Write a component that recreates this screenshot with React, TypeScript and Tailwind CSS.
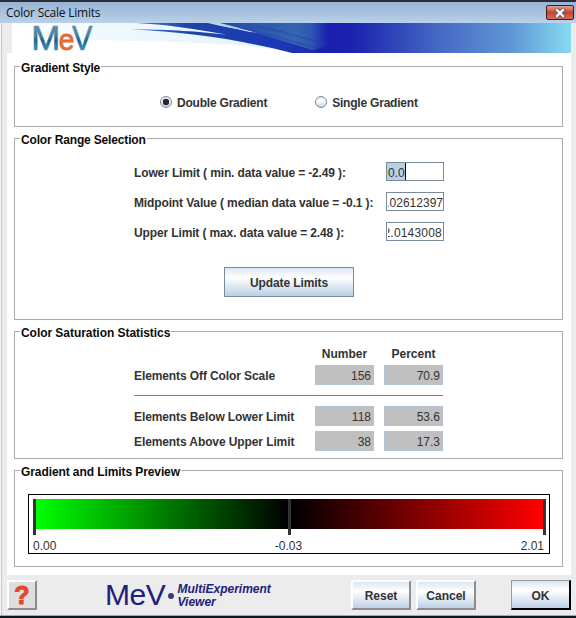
import type { ReactNode } from "react";

function Section({
  title,
  className,
  tracking = "tracking-[-0.16px]",
  children,
}: {
  title: string;
  className: string;
  tracking?: string;
  children: ReactNode;
}) {
  return (
    <fieldset className={`m-0 min-w-0 border border-[#a9abb1] p-0 ${className}`}>
      <legend className={`ml-[5px] h-[15px] px-px pt-[2px] text-[12px] leading-[14px] font-bold text-[#0c0c0c] ${tracking}`}>
        {title}
      </legend>
      {children}
    </fieldset>
  );
}

function Radio({ label, checked }: { label: string; checked?: boolean }) {
  return (
    <label className="flex h-4 items-center gap-[5px]">
      <svg width="12" height="12" viewBox="0 0 12 12">
        <defs>
          <linearGradient id="radioFill" x1="0" y1="0" x2="0" y2="1">
            <stop offset="0" stopColor="#dde8f3" />
            <stop offset="0.4" stopColor="#ffffff" />
            <stop offset="1" stopColor="#bfd2e5" />
          </linearGradient>
        </defs>
        <circle cx="6" cy="6" r="5.5" fill="url(#radioFill)" stroke="#7a8a99" />
        {checked && <circle cx="6" cy="6" r="3.2" fill="#222a33" />}
      </svg>
      <span className="pt-px tracking-[-0.21px]">{label}</span>
    </label>
  );
}

function LimitRow({ label, children }: { label: string; children: ReactNode }) {
  return (
    <div className="flex h-[19px] items-center">
      <span className="w-[252px] pt-[3px] leading-4 whitespace-nowrap tracking-[-0.13px]">{label}</span>
      <div className="flex h-[19px] w-[58px] items-center overflow-hidden border border-[#7a8a99] bg-white font-normal">
        {children}
      </div>
    </div>
  );
}

function StatCell({ value }: { value: string }) {
  return (
    <div className="h-5 w-[59px] border border-[#b4c3d3] bg-[#c0c0c0] pr-[2px] pt-[2px] text-right leading-4 font-normal">
      {value}
    </div>
  );
}

function StatRow({ label, number, percent }: { label: string; number: string; percent: string }) {
  return (
    <div className="flex h-5 gap-[10px]">
      <span className="w-[171px] pt-[3px] leading-4 whitespace-nowrap tracking-[-0.1px]">{label}</span>
      <StatCell value={number} />
      <StatCell value={percent} />
    </div>
  );
}

const raised =
  "flex h-[30px] w-[60px] items-center justify-center border-t-2 border-l-2 border-r-2 border-b-2 border-t-white border-l-white border-r-[#8d8d8d] border-b-[#8d8d8d] bg-linear-to-b from-[#dbe6f1] via-white via-35% to-[#bdd1e6] pt-[2px]";

function Banner() {
  return (
    <svg width="564" height="30" viewBox="7 23 564 30" className="block overflow-visible">
      <defs>
        <linearGradient id="sky" x1="0" x2="1">
          <stop offset="0" stopColor="#fff" />
          <stop offset="0.35" stopColor="#eef9fd" />
          <stop offset="1" stopColor="#e2f3fa" />
        </linearGradient>
        <linearGradient id="sea" gradientUnits="userSpaceOnUse" x1="310" x2="571" y1="0" y2="0">
          <stop offset="0" stopColor="#1c26ae" />
          <stop offset="0.07" stopColor="#1a1fae" />
          <stop offset="0.16" stopColor="#1b22ae" />
          <stop offset="0.5" stopColor="#466ac5" />
          <stop offset="0.78" stopColor="#6198d6" />
          <stop offset="1" stopColor="#86dcf0" />
        </linearGradient>
        <linearGradient id="wave" gradientUnits="userSpaceOnUse" x1="130" x2="325" y1="0" y2="0">
          <stop offset="0" stopColor="#4f80c8" />
          <stop offset="0.3" stopColor="#1f45a8" />
          <stop offset="0.75" stopColor="#1c38b6" />
          <stop offset="1" stopColor="#1c26ae" />
        </linearGradient>
        <linearGradient id="crest" gradientUnits="userSpaceOnUse" x1="215" x2="328" y1="0" y2="0">
          <stop offset="0" stopColor="#1f49a8" />
          <stop offset="0.7" stopColor="#3565b0" />
          <stop offset="0.85" stopColor="#2f58b0" />
          <stop offset="1" stopColor="#1b20ae" />
        </linearGradient>
        <linearGradient id="ink" gradientUnits="userSpaceOnUse" x1="0" x2="0" y1="24" y2="51">
          <stop offset="0" stopColor="#6f93a8" />
          <stop offset="0.45" stopColor="#3f7f9f" />
          <stop offset="0.6" stopColor="#17618c" />
          <stop offset="1" stopColor="#3b9ac0" />
        </linearGradient>
      </defs>
      <rect x="7" y="23" width="564" height="30" fill="#fff" />
      <rect x="7" y="23" width="5" height="30" fill="#ececec" />
      <path d="M12 23H240L290 52C220 38 120 44 12 36Z" fill="url(#sky)" />
      <path d="M312 23H571V53H312Z" fill="url(#sea)" />
      <path
        d="M136 23H210L250 32L316 38V53H292C240 40 190 32 130 29.6C170 29.4 195 31.5 226 34.6C190 28 165 24.5 136 23Z"
        fill="url(#wave)"
      />
      <path d="M208 23H222C232 26 240 28 248 30.5C234 29 220 26 208 23Z" fill="#b5d9ec" />
      <path d="M220 23H328V46L312 50C286 42 252 31 220 23Z" fill="url(#crest)" />
      <path d="M240 28C266 33 292 42 318 48M256 26C282 31 300 37 320 42" fill="none" stroke="#2036b4" strokeWidth="1.5" opacity="0.4" />
      <g fontFamily="Liberation Sans, sans-serif" fontWeight="400">
        <text x="31.2" y="50.3" fontSize="35" textLength="29" lengthAdjust="spacingAndGlyphs" fill="url(#ink)" stroke="url(#ink)" strokeWidth="0.6">
          M
        </text>
        <text x="72" y="50.3" fontSize="35" textLength="20.5" lengthAdjust="spacingAndGlyphs" fill="url(#ink)" stroke="url(#ink)" strokeWidth="0.6">
          V
        </text>
        <text x="58.8" y="50.2" fontSize="29" textLength="15.6" lengthAdjust="spacingAndGlyphs" fill="#e06d3a" stroke="#e06d3a" strokeWidth="0.9">
          e
        </text>
      </g>
    </svg>
  );
}

export default function App() {
  return (
    <div className="flex h-[618px] w-[576px] flex-col overflow-hidden bg-[#ececec] font-['Liberation_Sans',Arial,sans-serif] text-[12px] font-bold text-[#333]">
      <header className="flex h-[23px] items-center justify-between border-t-2 border-[#2b2d3c] bg-linear-to-b from-[#98b4d2] to-[#b9d1ea] pr-[2px] pl-[6px]">
        <h1 className="pt-px font-['Open_Sans',sans-serif] text-[12px] leading-4 font-normal tracking-[-0.23px] text-[#111]">
          Color Scale Limits
        </h1>
        <button className="flex h-[15px] w-7 items-center justify-center rounded-[2px] border border-[#4a1420] bg-linear-to-b from-[#e0a193] via-[#c5432e] via-50% to-[#d4705a]">
          <svg width="12" height="10" viewBox="0 0 12 10">
            <path d="M3 2L9 8M9 2L3 8" stroke="#53576a" strokeWidth="4" strokeLinecap="square" />
            <path d="M3 2L9 8M9 2L3 8" stroke="#fff" strokeWidth="2.4" strokeLinecap="square" />
          </svg>
        </button>
      </header>

      <div className="flex h-[592px] border-l border-[#f4f8fb]">
        <div className="w-[6px] shrink-0 border-l border-[#b7cddd] bg-[#ececec]" />
        <div className="flex w-[564px] shrink-0 flex-col">
          <Banner />
          <main className="flex h-[522px] flex-col gap-1 bg-white pt-[6px] pr-2 pl-[7px]">
            <Section title="Gradient Style" className="h-[68px]">
              <div className="flex gap-12 pt-5 pl-[145px]">
                <Radio label="Double Gradient" checked />
                <Radio label="Single Gradient" />
              </div>
            </Section>

            <Section title="Color Range Selection" className="h-[189px]">
              <div className="flex flex-col gap-[11px] pt-4 pl-[119px]">
                <LimitRow label="Lower Limit ( min. data value = -2.49 ):">
                  <span className="h-[17px] border-r border-black bg-[#b8cfe5] pt-[2px] pl-px leading-4">0.0</span>
                </LimitRow>
                <LimitRow label="Midpoint Value ( median data value = -0.1 ):">
                  <span className="ml-px flex h-[17px] w-[55px] justify-end overflow-hidden pt-[2px] leading-4">
                    -0.02612397
                  </span>
                </LimitRow>
                <LimitRow label="Upper Limit ( max. data value = 2.48 ):">
                  <span className="ml-px flex h-[17px] w-[54px] justify-end overflow-hidden pt-[2px] leading-4 tracking-[0.2px]">
                    2.0143008
                  </span>
                </LimitRow>
              </div>
              <button className="mt-[26px] ml-[209px] flex h-[30px] w-[130px] items-center justify-center border border-[#7a8a99] bg-linear-to-b from-[#dde8f3] via-white via-35% to-[#b8cfe5] pt-[2px] tracking-[-0.1px]">
                Update Limits
              </button>
            </Section>

            <Section title="Color Saturation Statistics" className="h-[135px]" tracking="tracking-[-0.05px]">
              <div className="flex w-[428px] flex-col pl-[119px]">
                <div className="flex h-[26px] gap-[10px] pt-[7px] pl-[181px] text-center leading-4">
                  <span className="w-[59px]">Number</span>
                  <span className="w-[59px]">Percent</span>
                </div>
                <StatRow label="Elements Off Color Scale" number="156" percent="70.9" />
                <div className="mt-[10px] mb-[10px] h-px bg-[#6f8497]" />
                <StatRow label="Elements Below Lower Limit" number="118" percent="53.6" />
                <div className="h-[5px]" />
                <StatRow label="Elements Above Upper Limit" number="38" percent="17.3" />
              </div>
            </Section>

            <Section title="Gradient and Limits Preview" className="h-[104px]" tracking="tracking-[-0.09px]">
              <div className="mt-4 ml-[13px] h-[60px] w-[522px] border border-black px-1 pt-1 font-normal">
                <div className="flex h-9 w-[513px] items-start">
                  <div className="h-9 w-[3px] bg-[#333]" />
                  <div className="h-[30px] w-[252px] bg-linear-to-r/srgb from-[#00ff00] to-black" />
                  <div className="h-9 w-[3px] bg-[#333]" />
                  <div className="h-[30px] w-[252px] bg-linear-to-r/srgb from-black to-[#ff0000]" />
                  <div className="h-9 w-[3px] bg-[#333]" />
                </div>
                <div className="flex w-[511px] justify-between pt-[3px] leading-4">
                  <span className="w-20">0.00</span>
                  <span>-0.03</span>
                  <span className="w-20 text-right">2.01</span>
                </div>
              </div>
            </Section>
          </main>

          <footer className="flex h-10 items-start pt-[5px]">
            <button className="flex h-[30px] w-[30px] items-center justify-center border-2 border-t-white border-l-white border-r-[#8d8d8d] border-b-[#8d8d8d] bg-[#dedede]">
              <span className="text-[25px] leading-6 font-bold text-[#e2482a] [-webkit-text-stroke:1px_#e2482a]">?</span>
            </button>
            <div className="ml-[68px] flex w-[246px] items-start text-[#22207a]">
              <span className="text-[30px] leading-[30px] font-normal tracking-[-0.4px]">MeV</span>
              <span className="mt-[13px] ml-[2px] h-[6px] w-[6px] rounded-full bg-[#3b3b78]" />
              <span className="ml-1 pt-[3px] text-[12px] leading-[13px] italic">
                MultiExperiment
                <br />
                Viewer
              </span>
            </div>
            <button className={raised}>Reset</button>
            <button className={`ml-[5px] ${raised}`}>Cancel</button>
            <button className="ml-[35px] flex h-[30px] w-[60px] items-center justify-center border border-r-2 border-b-2 border-[#9a9a9a] border-r-black border-b-black bg-linear-to-b from-[#dbe6f1] via-white via-35% to-[#bdd1e6] pt-[2px]">
              OK
            </button>
          </footer>
        </div>
      </div>
      <div className="h-[3px] border-t border-[#5fc3d6] bg-[#0a1a20]" />
    </div>
  );
}
